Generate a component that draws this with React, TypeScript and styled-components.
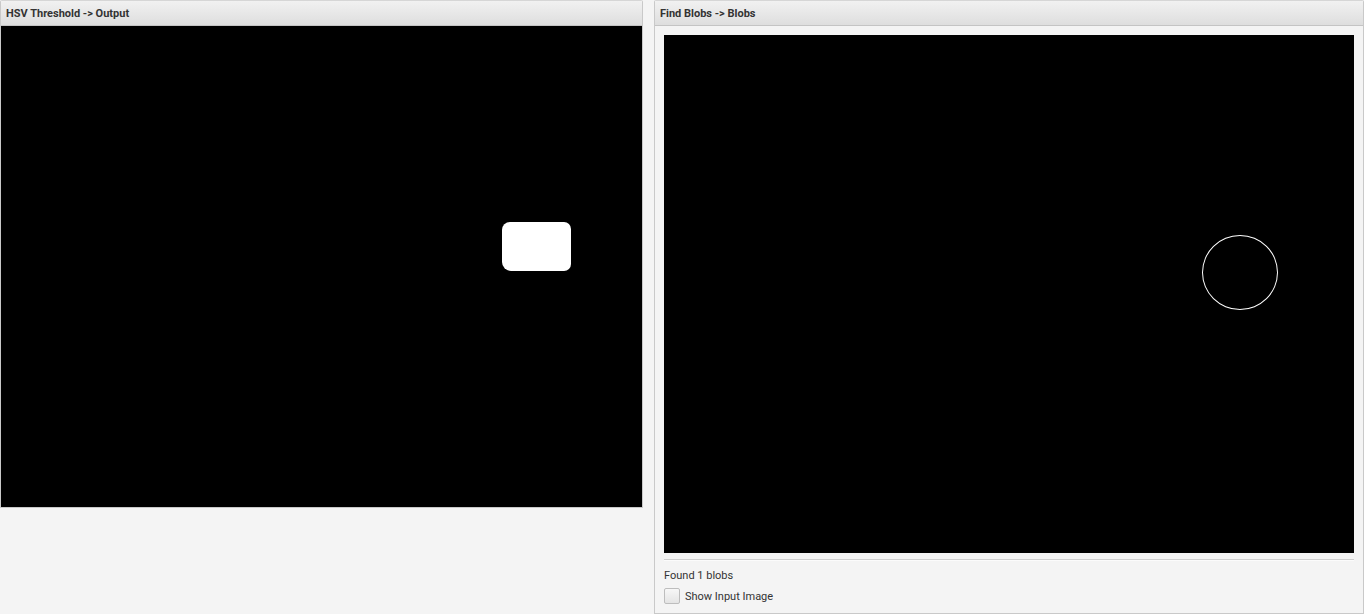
import React from "react";
import styled, { createGlobalStyle } from "styled-components";

const Global = createGlobalStyle`
  html, body { margin: 0; padding: 0; background: #f4f4f4; }
  body { font-family: Roboto, "Noto Sans", sans-serif; width: 1364px; height: 614px; overflow: hidden; }
`;

const Page = styled.div`
  display: flex;
  align-items: flex-start;
  gap: 11px;
  width: 1364px;
  height: 614px;
  box-sizing: border-box;
`;

const Panel = styled.div<{ $w: number; $h: number }>`
  width: ${(p) => p.$w}px;
  height: ${(p) => p.$h}px;
  box-sizing: border-box;
  border: 1px solid #c9c9c9;
  border-top-color: #d6d6d6;
  border-radius: 2px 2px 0 0;
  background: #f4f4f4;
  display: flex;
  flex-direction: column;
`;

const Header = styled.div`
  height: 25px;
  flex: none;
  box-sizing: border-box;
  background: linear-gradient(#f1f1f1, #dedede);
  border-bottom: 1px solid #c4c4c4;
  display: flex;
  align-items: center;
  padding-left: 5px;
  font-size: 11px;
  font-weight: bold;
  color: #333;
`;

const Body = styled.div`
  padding: 9px 9px 0 9px;
  display: flex;
  flex-direction: column;
`;

const Screen = styled.div<{ $w: number; $h: number }>`
  width: ${(p) => p.$w}px;
  height: ${(p) => p.$h}px;
  background: #000;
  position: relative;
  flex: none;
`;

const Blob = styled.div`
  position: absolute;
  left: 501px;
  top: 196px;
  width: 69px;
  height: 49px;
  background: #fff;
  border-radius: 8px 7px 7px 9px;
`;

const Ring = styled.div`
  position: absolute;
  left: 538px;
  top: 200px;
  width: 76px;
  height: 75px;
  box-sizing: border-box;
  border: 1px solid #fff;
  border-radius: 50%;
`;

const Divider = styled.div`
  height: 1px;
  background: #cfcfcf;
  margin-top: 6px;
  border-bottom: 1px solid #fbfbfb;
`;

const Info = styled.div`
  font-size: 11px;
  color: #333;
  margin-top: 8px;
  line-height: 14px;
`;

const CheckRow = styled.label`
  display: flex;
  align-items: center;
  gap: 5px;
  margin-top: 5px;
  font-size: 11px;
  color: #333;
`;

const Box = styled.span`
  width: 16px;
  height: 16px;
  box-sizing: border-box;
  border: 1px solid #bdbdbd;
  border-radius: 2px;
  background: linear-gradient(#f7f7f7, #e4e4e4);
`;

export default function App() {
  return (
    <>
      <Global />
      <Page>
        <Panel $w={643} $h={508}>
          <Header>HSV Threshold -&gt; Output</Header>
          <Screen $w={641} $h={481}>
            <Blob />
          </Screen>
        </Panel>
        <Panel $w={710} $h={614}>
          <Header>Find Blobs -&gt; Blobs</Header>
          <Body>
            <Screen $w={690} $h={518}>
              <Ring />
            </Screen>
            <Divider />
            <Info>Found 1 blobs</Info>
            <CheckRow>
              <Box />
              Show Input Image
            </CheckRow>
          </Body>
        </Panel>
      </Page>
    </>
  );
}
